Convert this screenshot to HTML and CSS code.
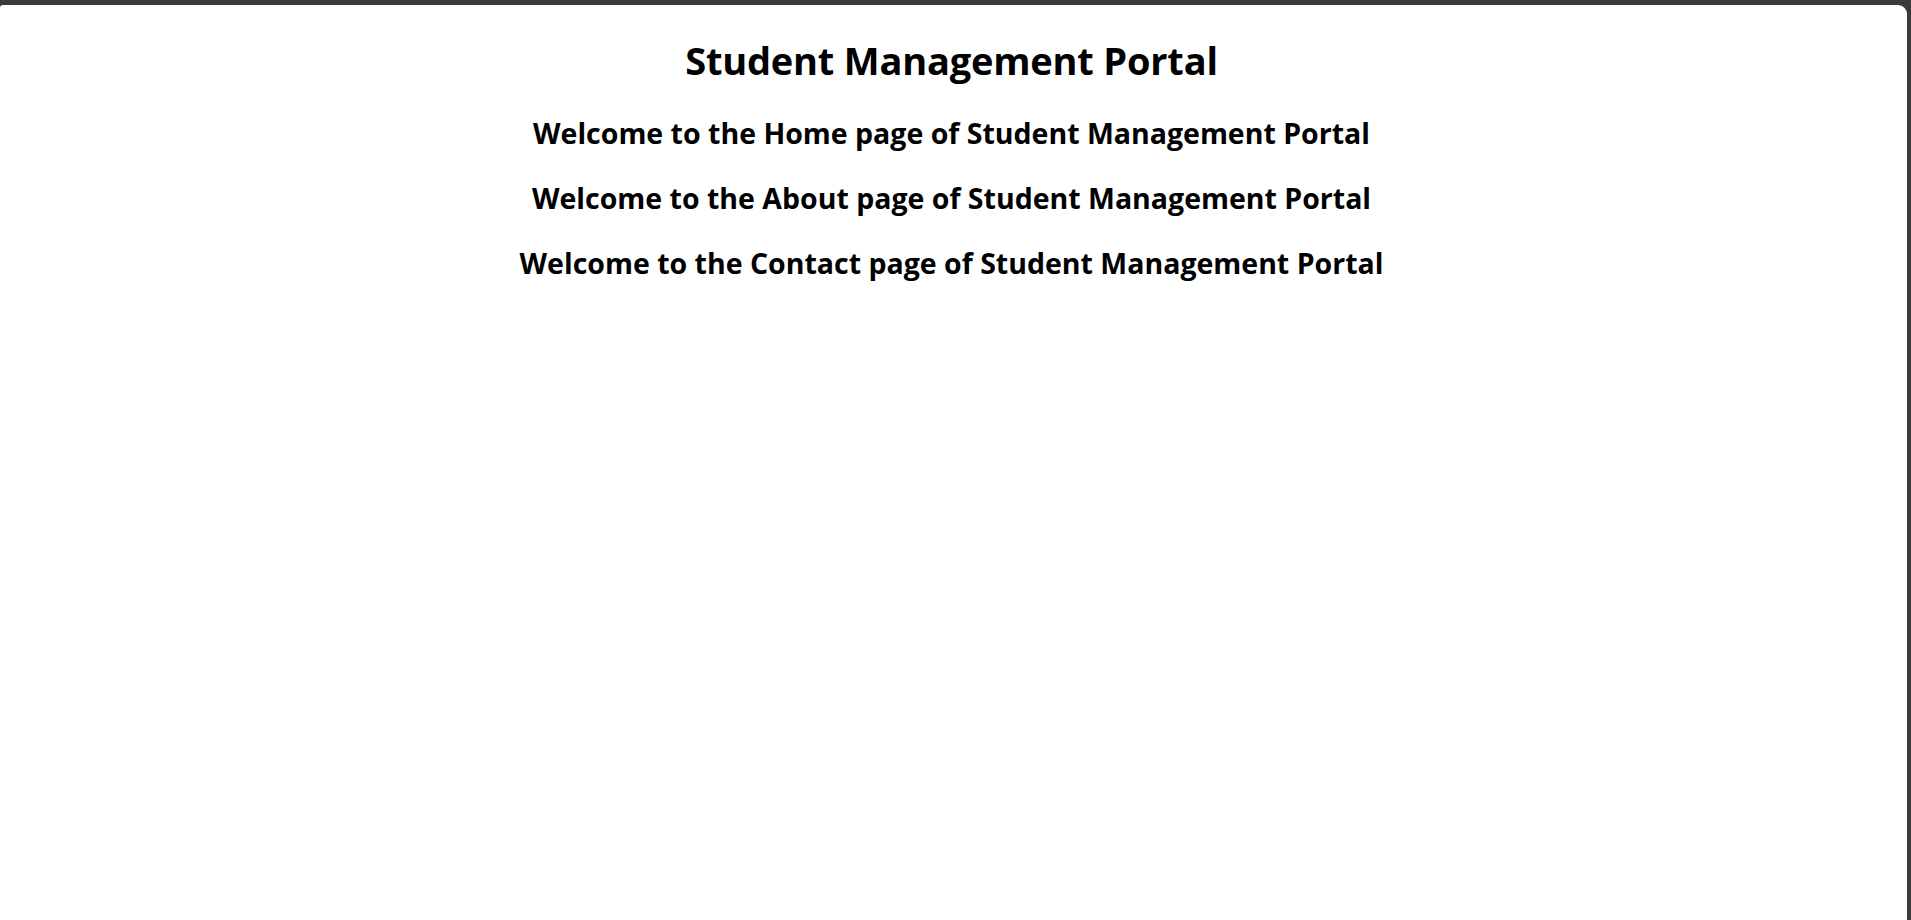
FILE: index.html
```html
<!DOCTYPE html>
<html lang="en">
<head>
<meta charset="utf-8">
<title>Student Management Portal</title>
<link rel="stylesheet" href="styles.css">
</head>
<body>
<div class="window">
  <main class="app">
    <h1 class="title">Student Management Portal</h1>
    <h2 class="page">Welcome to the Home page of Student Management Portal</h2>
    <h2 class="page">Welcome to the About page of Student Management Portal</h2>
    <h2 class="page">Welcome to the Contact page of Student Management Portal</h2>
  </main>
</div>
</body>
</html>
```
FILE: styles.css
```css
html, body {
  margin: 0;
  padding: 0;
  height: 100%;
  background: #3a3a3a;
}
body {
  overflow: hidden;
}
.window {
  margin: 5px 4px 0 0;
  height: calc(100% - 5px);
  background: #ffffff;
  border-radius: 3px 9px 0 0;
  overflow: hidden;
  display: flow-root;
}
.app {
  font-family: "Open Sans", "Lato", sans-serif;
  color: #000;
  text-align: center;
  display: flow-root;
  padding-right: 4px;
}
.title {
  font-size: 38px;
  line-height: 53px;
  font-weight: 700;
  letter-spacing: -0.2px;
  margin: 29px 0 26px;
}
.page {
  font-size: 28.5px;
  line-height: 40px;
  font-weight: 700;
  margin: 25px 0;
}
```
